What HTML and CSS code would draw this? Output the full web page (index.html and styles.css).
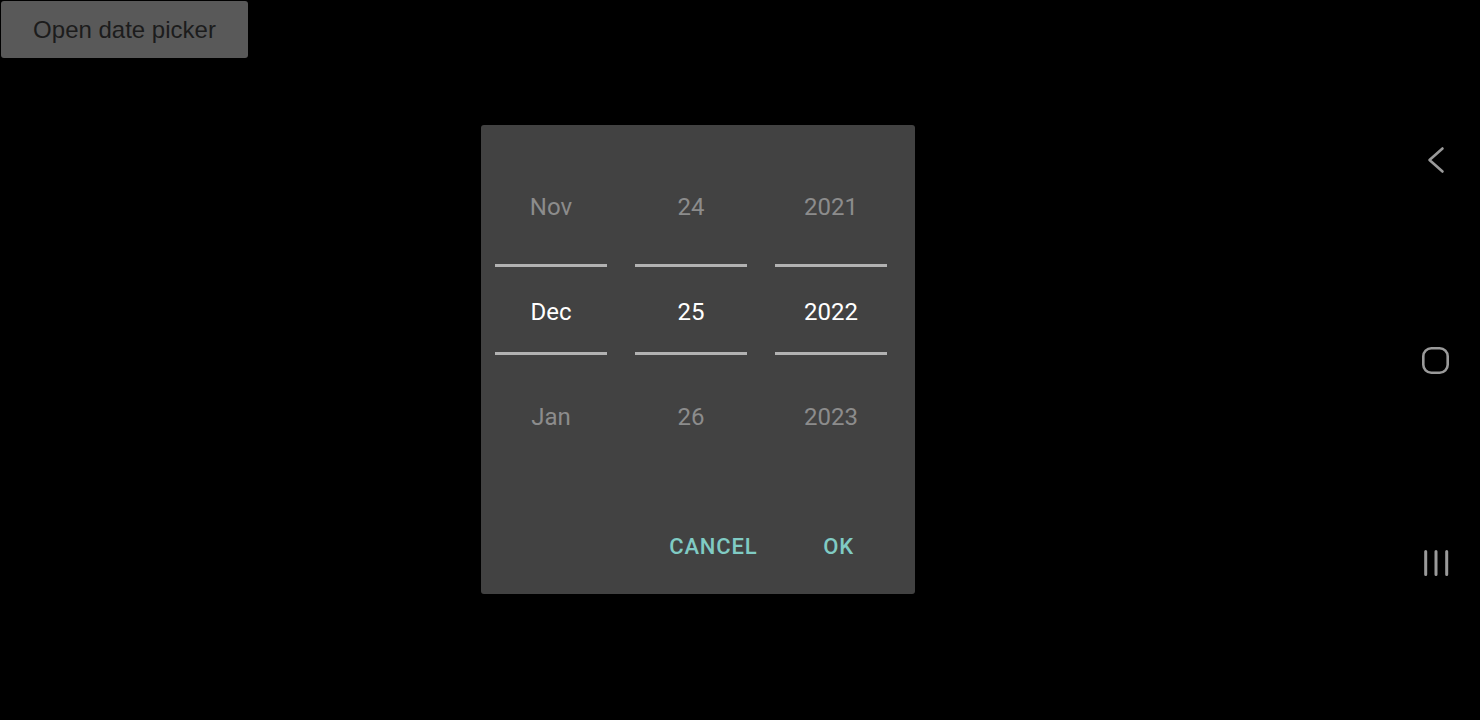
FILE: index.html
```html
<!DOCTYPE html>
<html>
<head>
<meta charset="utf-8">
<link rel="stylesheet" href="styles.css">
</head>
<body>
<div class="screen">
  <main class="app">
    <button class="open-btn">Open date picker</button>
  </main>
  <nav class="navbar">
    <svg class="nav-icon nav-back" width="28" height="28" viewBox="0 0 28 28"><path d="M20.5 2.5 L7.5 14 L20.5 25.5" fill="none" stroke="#9a9a9a" stroke-width="2.6" stroke-linecap="round" stroke-linejoin="round"/></svg>
    <svg class="nav-icon nav-home" width="28" height="28" viewBox="0 0 28 28"><rect x="1.3" y="1.3" width="24.4" height="24.4" rx="8" fill="none" stroke="#9a9a9a" stroke-width="2.6"/></svg>
    <svg class="nav-icon nav-recent" width="28" height="28" viewBox="0 0 28 28"><path d="M3.7 2.5 V25.5 M14 2.5 V25.5 M24.7 2.5 V25.5" fill="none" stroke="#9a9a9a" stroke-width="3" stroke-linecap="round"/></svg>
  </nav>
</div>
<div class="overlay">
  <div class="dialog">
    <div class="wheels">
      <div class="wheel">
        <div class="item dim">Nov</div>
        <div class="divider first"></div>
        <div class="item current">Dec</div>
        <div class="divider second"></div>
        <div class="item dim last">Jan</div>
      </div>
      <div class="wheel">
        <div class="item dim">24</div>
        <div class="divider first"></div>
        <div class="item current">25</div>
        <div class="divider second"></div>
        <div class="item dim last">26</div>
      </div>
      <div class="wheel">
        <div class="item dim">2021</div>
        <div class="divider first"></div>
        <div class="item current">2022</div>
        <div class="divider second"></div>
        <div class="item dim last">2023</div>
      </div>
    </div>
    <div class="actions">
      <span class="action">CANCEL</span>
      <span class="action">OK</span>
    </div>
  </div>
</div>
</body>
</html>
```

FILE: styles.css
```css
html, body {
  margin: 0;
  padding: 0;
  background: #000;
}
.screen {
  display: flex;
  width: 1480px;
  height: 720px;
}
.app {
  flex: 1;
  padding: 1px;
}
.open-btn {
  display: block;
  width: 247px;
  height: 57px;
  margin: 0;
  padding: 0;
  border: none;
  border-radius: 3px;
  background: #595959;
  color: #1c1c1c;
  font-family: "Liberation Sans", Arial, sans-serif;
  font-size: 24px;
  line-height: 57px;
  text-align: center;
}
.navbar {
  width: 88px;
  display: flex;
  flex-direction: column;
  align-items: center;
  padding-top: 146px;
  box-sizing: border-box;
}
.nav-icon {
  display: block;
}
.nav-home {
  margin-top: 173px;
}
.nav-recent {
  margin-top: 174px;
}
.overlay {
  position: fixed;
  left: 0;
  top: 0;
  width: 1392px;
  height: 720px;
  padding: 125px 0 0 4px;
  box-sizing: border-box;
  display: flex;
  align-items: flex-start;
  justify-content: center;
}
.dialog {
  width: 434px;
  height: 469px;
  box-sizing: border-box;
  background: #424242;
  border-radius: 3px;
  padding: 68px 0 0 14px;
  font-family: Roboto, "Noto Sans", sans-serif;
  display: flex;
  flex-direction: column;
}
.wheels {
  display: flex;
  gap: 28px;
}
.wheel {
  width: 112px;
  display: flex;
  flex-direction: column;
}
.item {
  height: 28px;
  line-height: 28px;
  font-size: 24px;
  text-align: center;
}
.dim {
  color: #8c8c8c;
}
.current {
  color: #ffffff;
}
.divider {
  height: 3px;
  background: #b2b2b2;
}
.divider.first {
  margin-top: 43px;
  margin-bottom: 31px;
}
.divider.second {
  margin-top: 26px;
  margin-bottom: 48px;
}
.actions {
  margin-top: 104px;
  display: flex;
  justify-content: flex-end;
  gap: 66px;
  padding-right: 61px;
}
.action {
  font-size: 22px;
  line-height: 24px;
  font-weight: 500;
  letter-spacing: 0.8px;
  color: #80cbc4;
}
```
